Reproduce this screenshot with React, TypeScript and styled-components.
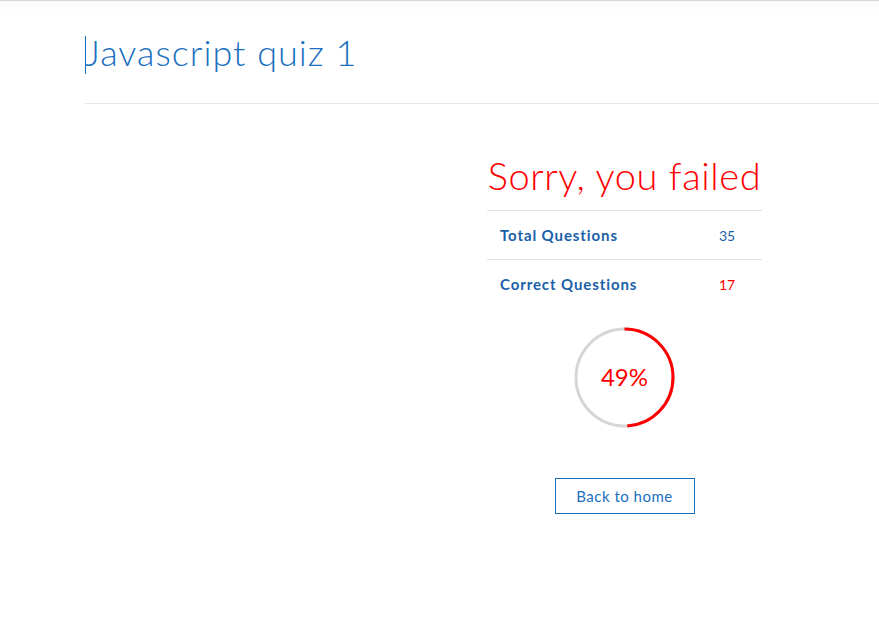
import React from "react";
import styled, { createGlobalStyle } from "styled-components";

const Global = createGlobalStyle`
  html, body { margin: 0; padding: 0; background: #fff; }
  body { font-family: "Lato", "Open Sans", sans-serif; overflow: hidden; }
`;

const TopShadow = styled.div`
  height: 1px;
  background: #d4d4dc;
  box-shadow: 0 2px 8px rgba(0, 0, 0, 0.22);
`;

const Page = styled.div`
  padding-left: 85px;
`;

const Header = styled.header`
  height: 102px;
  border-bottom: 1px solid #e6e6e6;
  display: flex;
  align-items: flex-start;
`;

const Title = styled.h1`
  position: relative;
  margin: 27px 0 0 0;
  font-family: "Lato", sans-serif;
  font-weight: 300;
  font-size: 36px;
  line-height: 48px;
  color: #1a6fbe;
  letter-spacing: 1px;
  &::before {
    content: "";
    position: absolute;
    left: 0;
    top: 8px;
    width: 1px;
    height: 38px;
    background: #1a6fbe;
  }
`;

const Body = styled.main`
  display: flex;
  padding-top: 42px;
`;

const Spacer = styled.div`
  width: 402px;
  flex: none;
`;

const Result = styled.section`
  width: 275px;
  display: flex;
  flex-direction: column;
  align-items: center;
`;

const Verdict = styled.h2`
  margin: 0;
  width: 100%;
  font-family: "Lato", sans-serif;
  font-weight: 300;
  font-size: 38px;
  line-height: 58px;
  color: #ff0000;
  text-align: center;
  letter-spacing: 0.6px;
`;

const Table = styled.div`
  width: 100%;
  margin-top: 6px;
`;

const Row = styled.div`
  display: flex;
  align-items: center;
  height: 48px;
  border-top: 1px solid #dee2e6;
  padding: 0 13px;
`;

const Label = styled.span`
  flex: 1;
  font-family: "Lato", sans-serif;
  font-weight: 700;
  font-size: 15px;
  color: #1a5fa8;
  letter-spacing: 0.9px;
`;

const Value = styled.span<{ $bad?: boolean }>`
  width: 30px;
  font-family: "Lato", sans-serif;
  font-size: 14px;
  color: ${(p) => (p.$bad ? "#ff0000" : "#1a5fa8")};
`;

const Ring = styled.div`
  position: relative;
  width: 101px;
  height: 101px;
  margin-top: 19px;
  svg { display: block; }
`;

const Percent = styled.span`
  position: absolute;
  inset: 0;
  display: flex;
  align-items: center;
  justify-content: center;
  font-family: "Lato", sans-serif;
  font-size: 24px;
  color: #ff0000;
  padding-bottom: 2px;
`;

const HomeButton = styled.button`
  margin-top: 50px;
  width: 140px;
  height: 36px;
  background: #fff;
  border: 1px solid #1a6fbe;
  color: #1a6fbe;
  font-family: "Lato", sans-serif;
  font-size: 15px;
  letter-spacing: 0.5px;
  cursor: pointer;
`;

export default function App() {
  const total = 35;
  const correct = 17;
  const pct = Math.round((correct / total) * 100);
  const r = 48.5;
  const c = 2 * Math.PI * r;
  return (
    <>
      <Global />
      <TopShadow />
      <Page>
        <Header>
          <Title>Javascript quiz 1</Title>
        </Header>
        <Body>
          <Spacer />
          <Result>
            <Verdict>Sorry, you failed</Verdict>
            <Table>
              <Row>
                <Label>Total Questions</Label>
                <Value>{total}</Value>
              </Row>
              <Row>
                <Label>Correct Questions</Label>
                <Value $bad>{correct}</Value>
              </Row>
            </Table>
            <Ring>
              <svg width="101" height="101" viewBox="0 0 101 101">
                <circle cx="50.5" cy="50.5" r={r} fill="none" stroke="#d6d6d6" strokeWidth="3" />
                <circle
                  cx="50.5"
                  cy="50.5"
                  r={r}
                  fill="none"
                  stroke="#ff0000"
                  strokeWidth="3"
                  strokeDasharray={`${(c * pct) / 100} ${c}`}
                  transform="rotate(-90 50.5 50.5)"
                />
              </svg>
              <Percent>{pct}%</Percent>
            </Ring>
            <HomeButton>Back to home</HomeButton>
          </Result>
        </Body>
      </Page>
    </>
  );
}
